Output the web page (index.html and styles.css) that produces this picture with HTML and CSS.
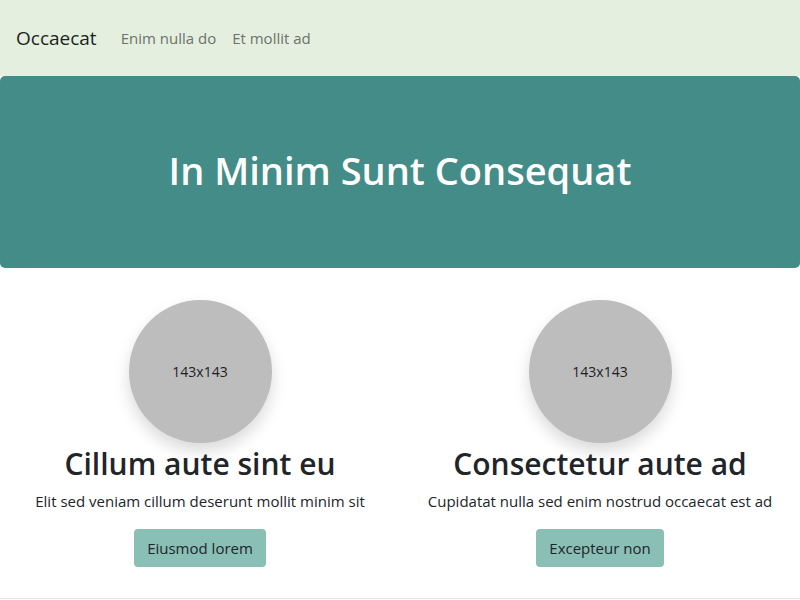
FILE: index.html
```html
<!DOCTYPE html>
<html>
<head>
<meta charset="utf-8">
<link rel="stylesheet" href="styles.css">
</head>
<body>
<nav class="navbar">
  <a class="brand">Occaecat</a>
  <a class="nav-link">Enim nulla do</a>
  <a class="nav-link">Et mollit ad</a>
</nav>
<header class="hero">
  <h1 class="hero-title">In Minim Sunt Consequat</h1>
</header>
<main class="features">
  <section class="feature">
    <div class="avatar">143x143</div>
    <h2 class="feature-title">Cillum aute sint eu</h2>
    <p class="feature-text">Elit sed veniam cillum deserunt mollit minim sit</p>
    <a class="btn">Eiusmod lorem</a>
  </section>
  <section class="feature">
    <div class="avatar">143x143</div>
    <h2 class="feature-title">Consectetur aute ad</h2>
    <p class="feature-text">Cupidatat nulla sed enim nostrud occaecat est ad</p>
    <a class="btn">Excepteur non</a>
  </section>
</main>
<hr class="divider">
</body>
</html>
```

FILE: styles.css
```css
* { box-sizing: border-box; }
body {
  margin: 0;
  font-family: "Open Sans", "Noto Sans", sans-serif;
  color: #212529;
  background: #fff;
}
.navbar {
  height: 76px;
  background: #e4efdf;
  display: flex;
  align-items: center;
  padding: 0 16px;
}
.brand {
  font-size: 19px;
  color: #1d1f1d;
  margin-right: 24px;
}
.nav-link {
  font-size: 15px;
  color: #6c736b;
  margin-right: 16px;
}
.hero {
  height: 192px;
  background: #448c88;
  border-radius: 5px;
  display: flex;
  align-items: center;
  justify-content: center;
}
.hero-title {
  margin: 0;
  color: #fff;
  font-size: 38px;
  font-weight: 600;
  padding-bottom: 5px;
}
.features {
  display: grid;
  grid-template-columns: 1fr 1fr;
  padding-top: 32px;
}
.feature {
  display: flex;
  flex-direction: column;
  align-items: center;
  text-align: center;
}
.avatar {
  width: 143px;
  height: 143px;
  border-radius: 50%;
  background: #bdbdbd;
  box-shadow: 0 8px 16px rgba(0,0,0,.15);
  display: flex;
  align-items: center;
  justify-content: center;
  font-size: 14px;
  color: #1e1e1e;
}
.feature-title {
  margin: 2px 0 6px;
  font-size: 30px;
  font-weight: 600;
  line-height: 38px;
}
.feature-text {
  margin: 0 0 16px;
  font-size: 15px;
  line-height: 24px;
}
.btn {
  display: inline-block;
  background: #89bfb4;
  border-radius: 4px;
  padding: 0 13px;
  height: 38px;
  line-height: 38px;
  font-size: 15px;
  color: #212529;
}
.divider {
  margin: 31px 0 0;
  border: 0;
  border-top: 1px solid #e5e5e5;
}
```
